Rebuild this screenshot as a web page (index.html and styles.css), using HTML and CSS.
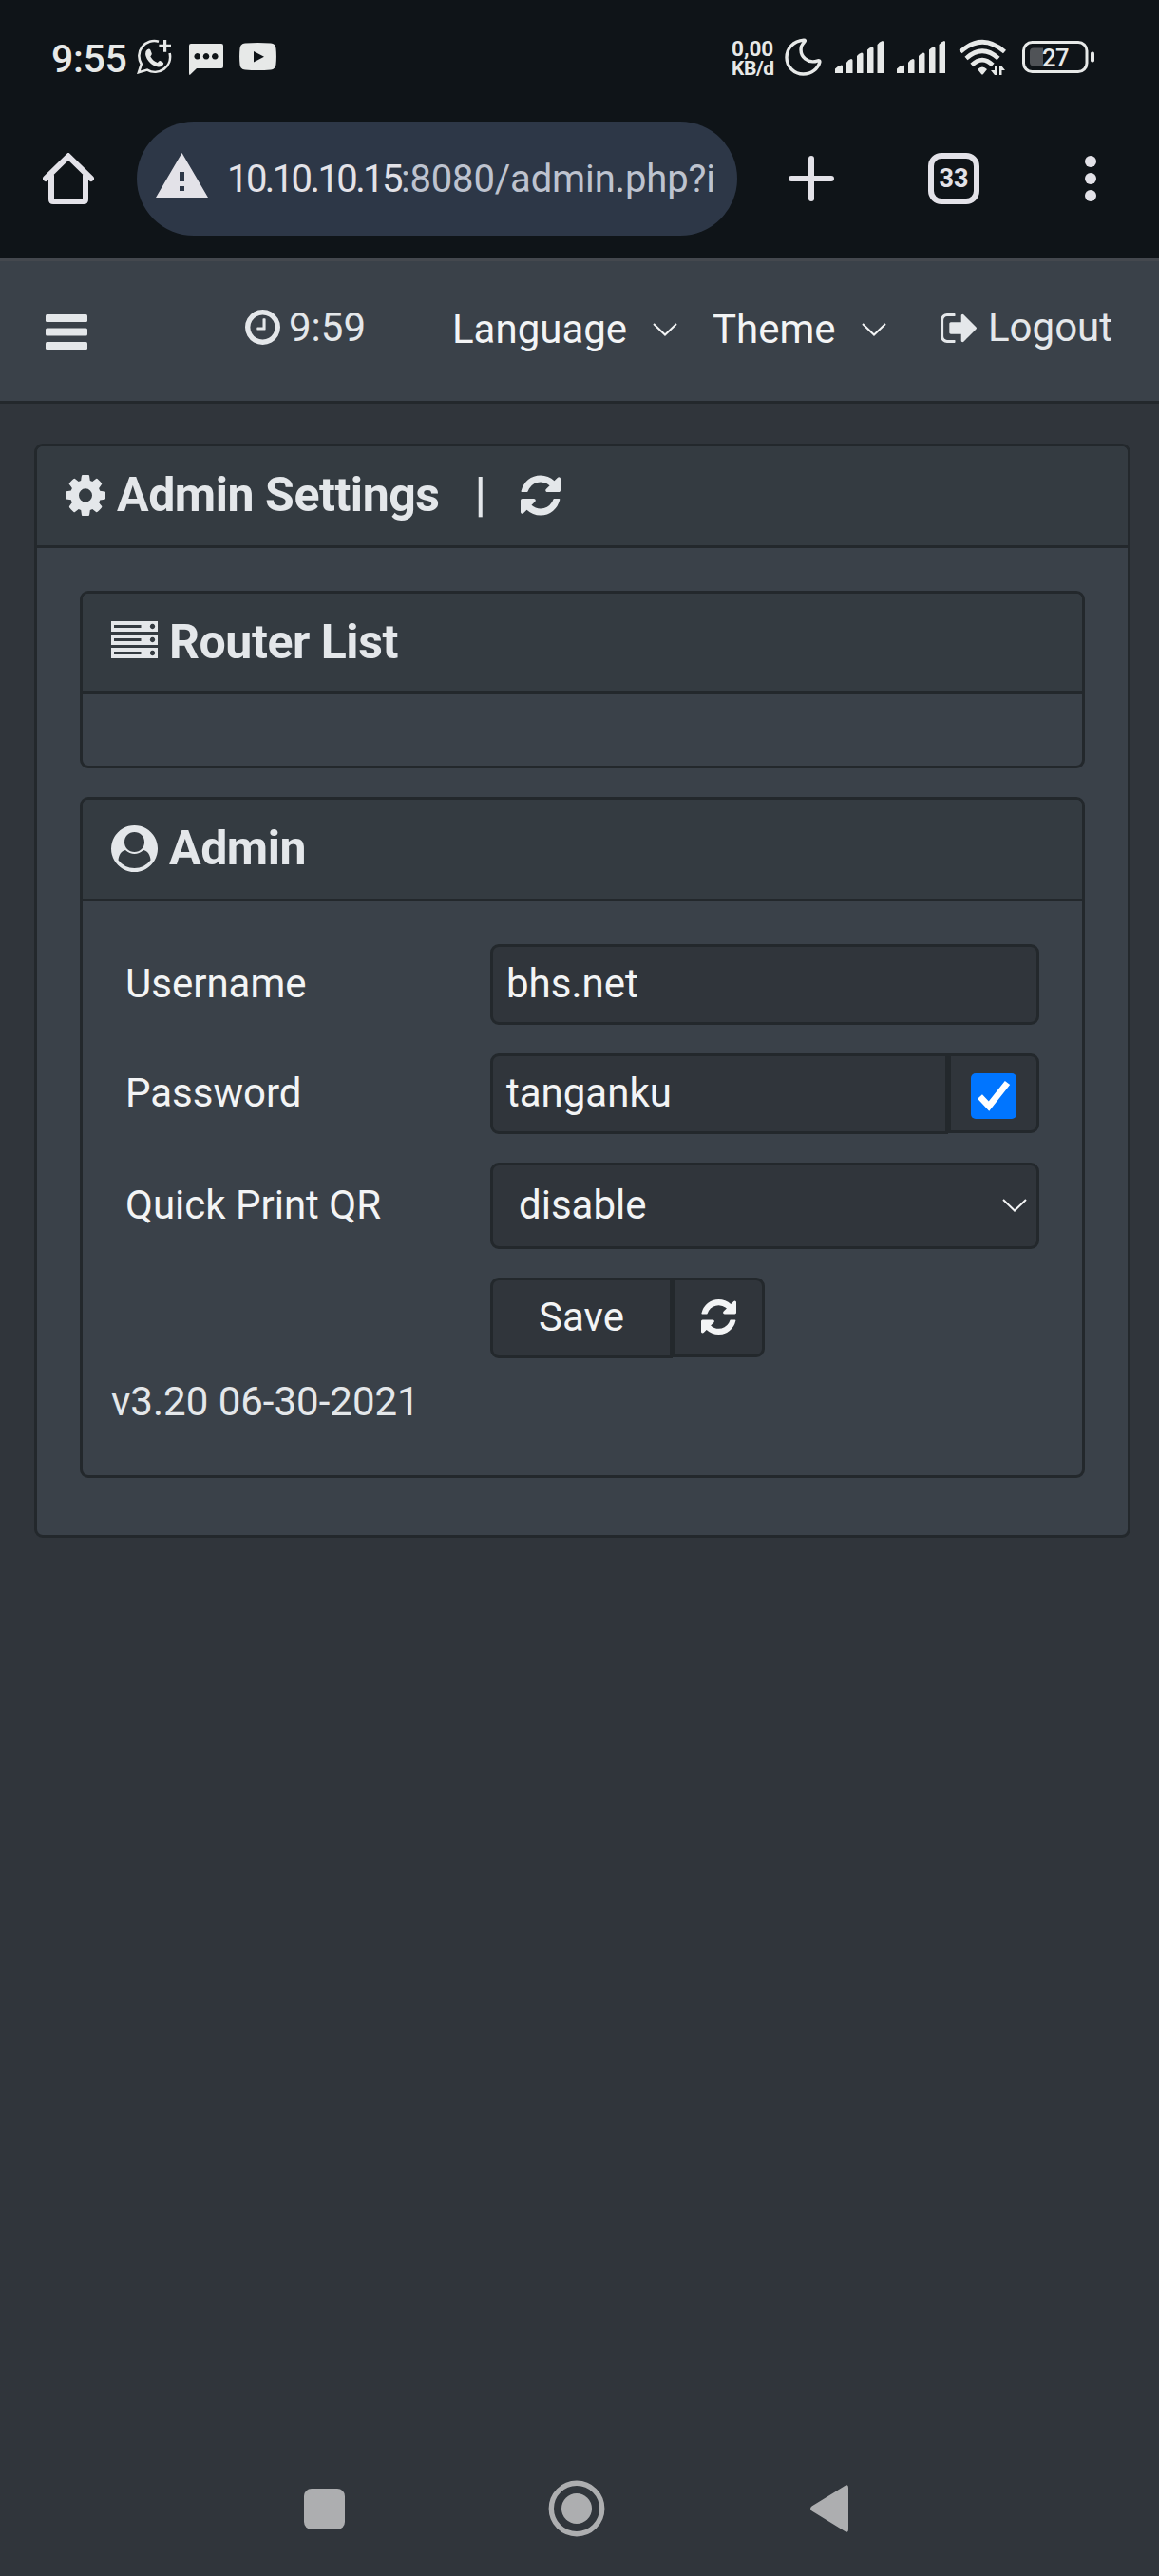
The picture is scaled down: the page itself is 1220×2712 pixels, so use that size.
FILE: index.html
```html
<!DOCTYPE html>
<html lang="en">
<head>
<meta charset="utf-8">
<title>Admin Settings</title>
<link rel="stylesheet" href="styles.css">
</head>
<body>
<svg class="defs" aria-hidden="true">
  <symbol id="refresh" viewBox="128 128 1536 1536"><path d="M1639 1056q0 5-1 7-64 268-268 434.500t-478 166.500q-146 0-282.500-55t-243.500-157l-129 129q-19 19-45 19t-45-19-19-45v-448q0-26 19-45t45-19h448q26 0 45 19t19 45-19 45l-137 137q71 66 161 102t187 36q134 0 250-65t186-179q11-17 53-117 8-23 30-23h192q13 0 22.500 9.500t9.500 22.500zm25-800v448q0 26-19 45t-45 19h-448q-26 0-45-19t-19-45 19-45l138-138q-148-137-349-137-134 0-250 65t-186 179q-11 17-53 117-8 23-30 23h-199q-13 0-22.500-9.500t-9.500-22.500v-7q65-268 270-434.500t480-166.500q146 0 284 55.500t245 156.500l130-129q19-19 45-19t45 19 19 45z"/></symbol>
  <symbol id="signal" viewBox="0 0 52 36"><path d="M0 35V30.500Q3 27 7 26.500Q8 26.500 8 28V35ZM12 35V24Q14 20.500 17 20Q18.500 20 18.500 21.500V35ZM23 35V17Q25 14 28 13.500Q29.500 13.500 29.500 15V35ZM34 35V10.500Q36 8 39 7.500Q40.500 7.500 40.500 9V35ZM44.500 35V5Q46.500 2 50 1Q51 1 51 2.500V35Z"/></symbol>
  <symbol id="chevron" viewBox="0 0 26 14"><path d="M1 1L13 12.500L25 1" fill="none" stroke="currentColor" stroke-width="2"/></symbol>
</svg>

<div class="status">
  <span class="status-time">9:55</span>
  <svg class="i-wa" width="37" height="37" viewBox="0 0 37 37"><g fill="none" stroke="currentColor" stroke-width="2.600"><path d="M23 2.700A16 16 0 0 0 4.800 26.500L2 35.200L11 32.600A16 16 0 0 0 34.600 15"/></g><path d="M28 1h3.200v4.700H36v3.200h-4.800v4.800H28V8.900h-4.600V5.700H28ZM9.500 13Q11 10.300 13 10.500Q14 10.700 14.500 12L15.800 15.500Q16 16.500 14.300 18.500Q17.300 23.500 21.800 25Q23.500 22.600 24.600 23L27.600 24.700Q28.600 25.300 27.800 27Q26 30 22.500 29.500Q16.500 28.500 12.500 23.500Q8 18 9.500 13Z"/></svg>
  <svg class="i-chat" width="37" height="34" viewBox="0 0 37 34"><path fill-rule="evenodd" d="M2 0H34Q36 0 36 2V24Q36 26 34 26H8L.800 33Q0 33 0 31V2Q0 0 2 0ZM8.700 10a3.300 3.300 0 1 0 .01 0ZM18 10a3.300 3.300 0 1 0 .01 0ZM27.300 10a3.300 3.300 0 1 0 .01 0Z"/></svg>
  <svg class="i-yt" width="39" height="29" viewBox="0 0 39 29"><path fill-rule="evenodd" d="M6 .600Q19.500-.600 33 .600Q38 1 38.500 6Q39.400 14.500 38.500 23Q38 28 33 28.400Q19.500 29.600 6 28.400Q1 28 .500 23Q-.400 14.500 .500 6Q1 1 6 .600ZM15 9V20.500L26 14.700Z"/></svg>
  <div class="speed"><span>0,00</span><span>KB/d</span></div>
  <svg class="i-moon" width="39" height="40" viewBox="0 0 39 40"><path d="M20 2.200C9 3 2 11 2 20.500C2 30.500 10 38 19.500 38C28 38 35 32.500 36.800 25.500C37.200 24 36 23.300 34.800 23.800C25 27.500 15 20 17.500 9C18 7 19.500 5.500 20.800 4C21.800 2.800 21.300 2.100 20 2.200Z" fill="none" stroke="currentColor" stroke-width="3.400"/></svg>
  <svg class="i-sig1" width="52" height="36"><use href="#signal"/></svg>
  <svg class="i-sig2" width="52" height="36"><use href="#signal"/></svg>
  <svg class="i-wifi" width="51" height="39" viewBox="0 0 51 39"><g fill="none" stroke="currentColor" stroke-width="4.600"><path d="M2 13.500Q25 -7 48.500 13.500"/><path d="M8 20.500Q25 5 42 20.500"/><path d="M14 27.500Q25 16.500 36 27.500"/></g><path d="M20 32Q25 27 30 32L26 37Q25 38 24 37ZM38 28h2.500v10H38l-4-5h4ZM43 28h2l4 5h-3.500v5H43Z"/></svg>
  <svg class="i-bat" width="77" height="34" viewBox="0 0 77 34"><rect x="1.500" y="1.500" width="66.500" height="31" rx="9" fill="none" stroke="currentColor" stroke-width="3"/><path d="M12 7.500H22V26.500H12Q8 26.500 8 22.500V11.500Q8 7.500 12 7.500Z" fill="#505357"/><rect x="72" y="11.500" width="4" height="11" rx="1.800"/><text x="21" y="27" font-size="25.500" font-weight="500" letter-spacing="-0.500">27</text></svg>
</div>

<div class="toolbar">
  <svg class="i-home" width="54" height="54" viewBox="0 0 54 54"><path d="M3 27L27 3.500L51 27M9 24V49Q9 51 11 51H43Q45 51 45 49V24" fill="none" stroke="currentColor" stroke-width="6" stroke-linecap="round"/></svg>
  <div class="address">
    <svg width="55" height="47" viewBox="0 0 55 47"><path fill-rule="evenodd" d="M27.500 0L55 47H0ZM25 20V30H30V20ZM25 35V40H30V35Z"/></svg>
    <div class="url"><span class="host">10.10.10.15</span><span class="path">:8080/admin.php?id=</span></div>
  </div>
  <svg class="i-plus" width="48" height="48" viewBox="0 0 48 48"><path d="M24 3V45M3 24H45" stroke="currentColor" stroke-width="6" stroke-linecap="round"/></svg>
  <span class="tabs">33</span>
  <svg class="i-dots" width="12" height="48" viewBox="0 0 12 48"><circle cx="6" cy="6" r="6"/><circle cx="6" cy="24" r="6"/><circle cx="6" cy="42" r="6"/></svg>
</div>

<nav class="navbar">
  <svg class="i-bars" width="44" height="37" viewBox="0 0 44 37"><rect width="44" height="8" rx="1.500"/><rect y="14.500" width="44" height="8" rx="1.500"/><rect y="29" width="44" height="8" rx="1.500"/></svg>
  <span class="nav-link clock"><svg width="37" height="37" viewBox="128 128 1536 1536"><path d="M1024 544v448q0 14-9 23t-23 9h-320q-14 0-23-9t-9-23v-64q0-14 9-23t23-9h224v-352q0-14 9-23t23-9h64q14 0 23 9t9 23zm416 352q0-148-73-273t-198-198-273-73-273 73-198 198-73 273 73 273 198 198 273 73 273-73 198-198 73-273zm224 0q0 209-103 385.500t-279.500 279.500-385.500 103-385.500-103-279.500-279.500-103-385.500 103-385.500 279.500-279.500 385.500-103 385.500 103 279.500 279.500 103 385.500z"/></svg>9:59</span>
  <span class="nav-select language">Language<svg width="26" height="14"><use href="#chevron"/></svg></span>
  <span class="nav-select theme">Theme<svg width="26" height="14"><use href="#chevron"/></svg></span>
  <span class="nav-link logout"><svg width="38" height="31" viewBox="64 256 1568 1280"><path d="M704 1440q0 4 1 20t.5 26.500-3 23.500-10 19.500-20.500 6.500h-320q-119 0-203.500-84.500t-84.500-203.500v-704q0-119 84.500-203.500t203.500-84.500h320q13 0 22.500 9.500t9.500 22.500q0 4 1 20t.5 26.500-3 23.500-10 19.500-20.500 6.500h-320q-66 0-113 47t-47 113v704q0 66 47 113t113 47h312l11.500 1 11.500 3 8 5.500 7 9 2 13.500zm928-544q0 26-19 45l-544 544q-19 19-45 19t-45-19-19-45v-288h-448q-26 0-45-19t-19-45v-384q0-26 19-45t45-19h448v-288q0-26 19-45t45-19 45 19l544 544q19 19 19 45z"/></svg>Logout</span>
</nav>

<main class="content">
  <section class="card">
    <h3 class="card-header main-header">
      <svg width="42" height="43" viewBox="128 128 1536 1536" preserveAspectRatio="none"><path d="M1152 896q0-106-75-181t-181-75-181 75-75 181 75 181 181 75 181-75 75-181zm512-109v222q0 12-8 23t-20 13l-185 28q-19 54-39 91 35 50 107 138 10 12 10 25t-9 23q-27 37-99 108t-94 71q-12 0-26-9l-138-108q-44 23-91 38-16 136-29 186-7 28-36 28h-222q-14 0-24.500-8.500t-11.500-21.500l-28-184q-49-16-90-37l-141 107q-10 9-25 9-14 0-25-11-126-114-165-168-7-10-7-23 0-12 8-23 15-21 51-66.500t54-70.500q-27-50-41-99l-183-27q-13-2-21-12.500t-8-23.500v-222q0-12 8-23t19-13l186-28q14-46 39-92-40-57-107-138-10-12-10-24 0-10 9-23 26-36 98.500-107.500t94.500-71.500q13 0 26 10l138 107q44-23 91-38 16-136 29-186 7-28 36-28h222q14 0 24.500 8.500t11.500 21.500l28 184q49 16 90 37l142-107q9-9 24-9 13 0 25 10 129 119 165 170 7 8 7 22 0 12-8 23-15 21-51 66.500t-54 70.500q26 50 41 98l183 28q13 2 21 12.500t8 23.500z"/></svg>
      <span>Admin Settings</span>
      <span class="bar">|</span>
      <svg class="reload" width="42" height="43" viewBox="0 0 42 43"><use href="#refresh" width="42" height="43"/></svg>
    </h3>
    <div class="card-body">
      <section class="card">
        <h3 class="card-header sub-header">
          <svg class="server" width="49" height="39" viewBox="0 0 49 39"><path fill-rule="evenodd" d="M0 0H49V11H0ZM3 4V7H31.500V4ZM43.500 2.800a2.700 2.700 0 1 0 .01 0ZM0 14H49V25H0ZM3 18V21H31.500V18ZM43.500 16.800a2.700 2.700 0 1 0 .01 0ZM0 28H49V39H0ZM3 32V35H31.500V32ZM43.500 30.800a2.700 2.700 0 1 0 .01 0Z"/></svg>
          <span>Router List</span>
        </h3>
        <div class="router-list"></div>
      </section>
      <section class="card">
        <h3 class="card-header sub-header">
          <svg width="49" height="49" viewBox="0 0 49 49"><path fill-rule="evenodd" d="M24.500 0a24.500 24.500 0 1 0 .01 0ZM24.500 7C30.500 7 35 11.500 35 17.500C35 23.500 30.500 28 24.500 28C18.500 28 14 23.500 14 17.500C14 11.500 18.500 7 24.500 7ZM7.500 36.500C8 31 10.500 27 15 26Q19.500 30 24.500 30Q29.500 30 34 26C38.500 27 41 31 41.500 36.500Q35 45 24.500 45Q14 45 7.500 36.500Z"/></svg>
          <span>Admin</span>
        </h3>
        <div class="admin-body">
          <div class="form">
            <label>Username</label>
            <div class="control">bhs.net</div>
            <label>Password</label>
            <div class="group">
              <div class="control first grow">tanganku</div>
              <div class="control last check"><svg width="48" height="48" viewBox="0 0 48 48"><rect width="48" height="48" rx="5" fill="#0075ff"/><path d="M9.500 24.500L19 34.500L38.500 10" fill="none" stroke="#fff" stroke-width="6.800"/></svg></div>
            </div>
            <label>Quick Print QR</label>
            <div class="control select">disable<svg width="26" height="14"><use href="#chevron"/></svg></div>
            <div class="group actions">
              <div class="control first save">Save</div>
              <div class="control last reset"><svg width="37" height="37"><use href="#refresh"/></svg></div>
            </div>
          </div>
          <div class="version">v3.20 06-30-2021</div>
        </div>
      </section>
    </div>
  </section>
</main>

<div class="sysnav">
  <svg width="43" height="43" viewBox="0 0 43 43"><rect width="43" height="43" rx="8"/></svg>
  <svg class="i-circle" width="60" height="60" viewBox="0 0 60 60"><circle cx="30" cy="30" r="26.700" fill="none" stroke="currentColor" stroke-width="5.400"/><circle cx="30" cy="30" r="16"/></svg>
  <svg class="i-back" width="40" height="50" viewBox="0 0 40 50"><path d="M36 1.200Q40 -1.500 40 3V47Q40 51.500 36 48.800L1.500 27.500Q-1.500 25 1.500 22.500Z"/></svg>
</div>
</body>
</html>
```
FILE: styles.css
```css
* { box-sizing: border-box; }

body {
  margin: 0;
  height: 2712px;
  display: flex;
  flex-direction: column;
  overflow: hidden;
  background: #30353b;
  color: #e4e7ea;
  font-family: Roboto, sans-serif;
  font-size: 42px;
  line-height: 50px;
}

svg { display: block; flex: none; fill: currentColor; }
.defs { position: absolute; width: 0; height: 0; }

/* phone status bar */
.status {
  height: 118px;
  display: flex;
  align-items: flex-start;
  padding-left: 54px;
  background: #0f1418;
  color: #e7e9e8;
}
.status-time { width: 90px; margin-top: 37px; font-size: 41px; font-weight: 500; letter-spacing: -0.3px; }
.i-wa { margin-top: 41px; }
.i-chat { margin: 46px 0 0 18px; }
.i-yt { margin: 45px 0 0 16px; }
.speed {
  width: 46px;
  margin: 41px 0 0 479px;
  display: flex;
  flex-direction: column;
  font-size: 22.500px;
  font-weight: 700;
  line-height: 21px;
  white-space: nowrap;
}
.speed span + span { font-size: 21px; letter-spacing: -0.4px; }
.i-moon { margin: 40px 0 0 10px; }
.i-sig1 { margin: 42px 0 0 14px; }
.i-sig2 { margin: 42px 0 0 13px; }
.i-wifi { margin: 41px 0 0 13px; }
.i-bat { margin: 43px 0 0 16px; }

/* browser toolbar */
.toolbar {
  height: 154px;
  display: flex;
  align-items: center;
  padding: 0 66px 14px 45px;
  background: #0f1418;
  color: #e3e2e8;
}
.address {
  width: 632px;
  height: 120px;
  display: flex;
  align-items: center;
  margin-left: 45px;
  padding: 0 24px 0 20px;
  border-radius: 60px;
  background: #2d3747;
}
.address svg { margin-bottom: 7px; }
.url { flex: 1; margin: 1px 0 0 20px; overflow: hidden; white-space: nowrap; font-size: 40px; }
.host { letter-spacing: -2.600px; }
.path { color: #bec3cf; letter-spacing: -0.150px; }
.i-plus { margin-left: 54px; }
.tabs {
  width: 54px;
  height: 54px;
  margin-left: 99px;
  border: 6px solid currentColor;
  border-radius: 14px;
  font-size: 27px;
  font-weight: 700;
  line-height: 43px;
  text-align: center;
}
.i-dots { margin-left: auto; }

/* page navbar */
.navbar {
  height: 153px;
  display: flex;
  align-items: flex-start;
  padding: 0 46px 0 48px;
  border-top: 3px solid #44484e;
  border-bottom: 3px solid #23282c;
  background: #3a4149;
}
.i-bars { margin-top: 56px; }
.nav-link, .nav-select { display: flex; align-items: center; }
.nav-link { margin-top: 45px; }
.nav-select { margin-top: 47px; color: #f3f4f5; }
.clock { width: 218px; margin-left: 166px; gap: 9px; }
.clock svg { margin-bottom: 2px; }
.language { width: 274px; }
.theme { width: 240px; }
.nav-select svg { margin-left: 27px; }
.logout { gap: 12px; }

/* cards */
.content { flex: 1; padding: 42px 30px 0 36px; }
.card { border: 3px solid #23282c; border-radius: 9px; background: #3a4149; }
.card-header {
  height: 107px;
  display: flex;
  align-items: center;
  gap: 12px;
  margin: 0;
  padding: 0 30px 2px;
  border-bottom: 3px solid #23282c;
  border-radius: 6px 6px 0 0;
  background: #343b41;
  font-size: 50px;
  font-weight: 700;
  letter-spacing: -0.450px;
}
.main-header { height: 107px; }
.sub-header { height: 106px; }
.card .card + .card .sub-header { height: 107px; }
.bar { margin-left: 25px; font-weight: 500; }
.reload { margin-left: 24px; }
.server { margin-bottom: 4px; }
.card-body { display: flex; flex-direction: column; gap: 30px; padding: 45px 45px 60px; }
.router-list { height: 75px; }
.admin-body { height: 604px; padding: 45px 45px 0 30px; }

/* form */
.form {
  display: grid;
  grid-template-columns: 384px 578px;
  row-gap: 30px;
  align-items: center;
  margin-left: 15px;
  color: #f3f4f5;
}
.form label { padding-bottom: 2px; }
.control {
  height: 85px;
  display: flex;
  align-items: center;
  padding: 0 14px 1px;
  border: 3px solid #23282c;
  border-radius: 9px;
  background: #30353b;
}
.group { display: flex; align-items: flex-start; }
.grow { flex: 1; }
.first { border-radius: 9px 0 0 9px; }
.last { height: 84px; justify-content: center; border-radius: 0 9px 9px 0; }
.check { width: 96px; padding-top: 7px; }
.select { height: 91px; justify-content: space-between; padding-left: 27px; padding-right: 10px; }
.actions { grid-column: 2; }
.save { width: 192px; justify-content: center; }
.reset { width: 97px; padding-bottom: 2px; }
.version { margin: 21px 0 0; }

/* phone navigation */
.sysnav { height: 142px; display: flex; align-items: center; padding-left: 320px; color: #adaeb0; }
.i-circle { margin-left: 214px; }
.i-back { margin-left: 216px; }
```
